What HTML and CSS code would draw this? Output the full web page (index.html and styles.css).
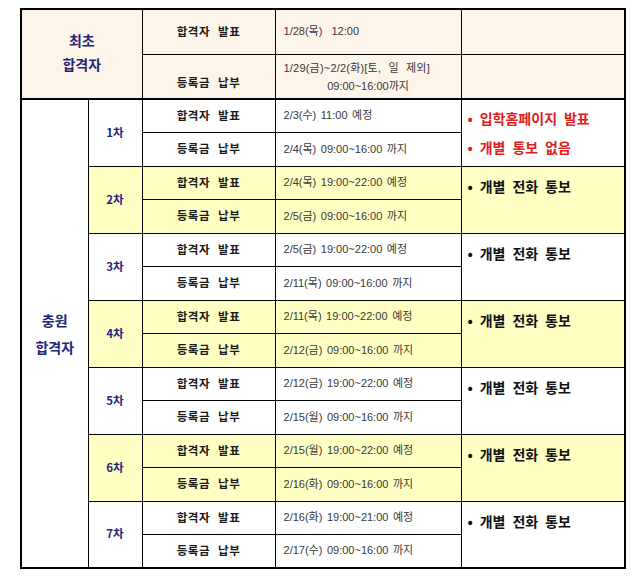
FILE: index.html
```html
<!DOCTYPE html>
<html lang="ko">
<head>
<meta charset="utf-8">
<title>합격자 발표 일정</title>
<link rel="stylesheet" href="styles.css">
</head>
<body>
<table class="sched">
  <colgroup>
    <col class="c1"><col class="c2"><col class="c3"><col class="c4"><col class="c5">
  </colgroup>
  <tbody class="first">
    <tr class="rt">
      <td class="group" colspan="2" rowspan="2">최초<br>합격자</td>
      <td class="label">합격자 발표</td>
      <td class="data">1/28(목) &nbsp;12:00</td>
      <td class="note"></td>
    </tr>
    <tr class="rt">
      <td class="label label-low">등록금 납부</td>
      <td class="data data-two"><span class="l1">1/29(금)~2/2(화)[토, 일 제외]</span><span class="l2">09:00~16:00까지</span></td>
      <td class="note"></td>
    </tr>
  </tbody>
  <tbody class="extra">
    <tr class="r">
      <td class="group big" rowspan="14">충원<br>합격자</td>
      <td class="round" rowspan="2">1차</td>
      <td class="label">합격자 발표</td>
      <td class="data">2/3(수) 11:00 예정</td>
      <td class="note red" rowspan="2"><div>• 입학홈페이지 발표</div><div>• 개별 통보 없음</div></td>
    </tr>
    <tr class="r">
      <td class="label">등록금 납부</td>
      <td class="data">2/4(목) 09:00~16:00 까지</td>
    </tr>
    <tr class="r y">
      <td class="round" rowspan="2">2차</td>
      <td class="label">합격자 발표</td>
      <td class="data">2/4(목) 19:00~22:00 예정</td>
      <td class="note" rowspan="2">• 개별 전화 통보</td>
    </tr>
    <tr class="r y">
      <td class="label">등록금 납부</td>
      <td class="data">2/5(금) 09:00~16:00 까지</td>
    </tr>
    <tr class="r">
      <td class="round" rowspan="2">3차</td>
      <td class="label">합격자 발표</td>
      <td class="data">2/5(금) 19:00~22:00 예정</td>
      <td class="note" rowspan="2">• 개별 전화 통보</td>
    </tr>
    <tr class="r">
      <td class="label">등록금 납부</td>
      <td class="data">2/11(목) 09:00~16:00 까지</td>
    </tr>
    <tr class="r y">
      <td class="round" rowspan="2">4차</td>
      <td class="label">합격자 발표</td>
      <td class="data">2/11(목) 19:00~22:00 예정</td>
      <td class="note" rowspan="2">• 개별 전화 통보</td>
    </tr>
    <tr class="r y">
      <td class="label">등록금 납부</td>
      <td class="data">2/12(금) 09:00~16:00 까지</td>
    </tr>
    <tr class="r">
      <td class="round" rowspan="2">5차</td>
      <td class="label">합격자 발표</td>
      <td class="data">2/12(금) 19:00~22:00 예정</td>
      <td class="note" rowspan="2">• 개별 전화 통보</td>
    </tr>
    <tr class="r">
      <td class="label">등록금 납부</td>
      <td class="data">2/15(월) 09:00~16:00 까지</td>
    </tr>
    <tr class="r y">
      <td class="round" rowspan="2">6차</td>
      <td class="label">합격자 발표</td>
      <td class="data">2/15(월) 19:00~22:00 예정</td>
      <td class="note" rowspan="2">• 개별 전화 통보</td>
    </tr>
    <tr class="r y">
      <td class="label">등록금 납부</td>
      <td class="data">2/16(화) 09:00~16:00 까지</td>
    </tr>
    <tr class="r">
      <td class="round" rowspan="2">7차</td>
      <td class="label">합격자 발표</td>
      <td class="data">2/16(화) 19:00~21:00 예정</td>
      <td class="note" rowspan="2">• 개별 전화 통보</td>
    </tr>
    <tr class="r">
      <td class="label">등록금 납부</td>
      <td class="data">2/17(수) 09:00~16:00 까지</td>
    </tr>
  </tbody>
</table>
</body>
</html>
```
FILE: styles.css
```css
html, body {
  margin: 0;
  padding: 0;
  background: #ffffff;
}
body {
  padding: 8px 0 0 20px;
  font-family: "Noto Sans CJK KR", "Liberation Sans", sans-serif;
}
.sched {
  border-collapse: collapse;
  table-layout: fixed;
  width: 606px;
  border: 2px solid #000;
}
.c1 { width: 67px; }
.c2 { width: 54px; }
.c3 { width: 133px; }
.c4 { width: 186px; }
.c5 { width: 164px; }
.sched td {
  border: 1px solid #000;
  padding: 0;
  vertical-align: middle;
  line-height: 1.2;
}
.first td {
  background: #fdf5e9;
}
.first tr:last-child td,
.first td.group {
  border-bottom: 2px solid #000;
}
.rt { height: 45px; }
.r { height: 33.5px; }
.y td { background: #ffffc4; }
.y td.group { background: #ffffff; }

.group {
  text-align: center;
  color: #25257a;
  font-size: 14px;
  font-weight: 700;
  line-height: 24px !important;
  padding-bottom: 4px !important;
}
.group.big {
  line-height: 27px !important;
  padding: 0 0 0 !important;
  background: #fff;
}
.round {
  text-align: center;
  color: #25257a;
  font-size: 11.5px;
  font-weight: 700;
}
.label {
  text-align: center;
  color: #1a1a1a;
  font-size: 11.5px;
  font-weight: 700;
  letter-spacing: 0.6px;
  word-spacing: 4px;
}
.label-low {
  padding-top: 14px !important;
}
.data {
  padding-left: 8px !important;
  color: #383838;
  font-size: 11px;
  font-family: "Liberation Sans", "Noto Sans CJK KR", sans-serif;
  white-space: nowrap;
  word-spacing: 1.5px;
}
.data-two .l1 {
  display: block;
  padding-top: 2px;
  word-spacing: 4px;
  letter-spacing: 0.2px;
}
.data-two .l2 {
  display: block;
  text-align: center;
  padding-right: 8px;
  margin-top: 5px;
  word-spacing: 0;
}
.note {
  vertical-align: top !important;
  padding: 11px 0 0 6px !important;
  font-size: 14px;
  font-weight: 700;
  color: #111;
  word-spacing: 3px;
  white-space: nowrap;
}
.note.red {
  color: #e0201e;
  line-height: 29px !important;
  padding-top: 4px !important;
}
.first .note {
  padding: 0 !important;
}
```
